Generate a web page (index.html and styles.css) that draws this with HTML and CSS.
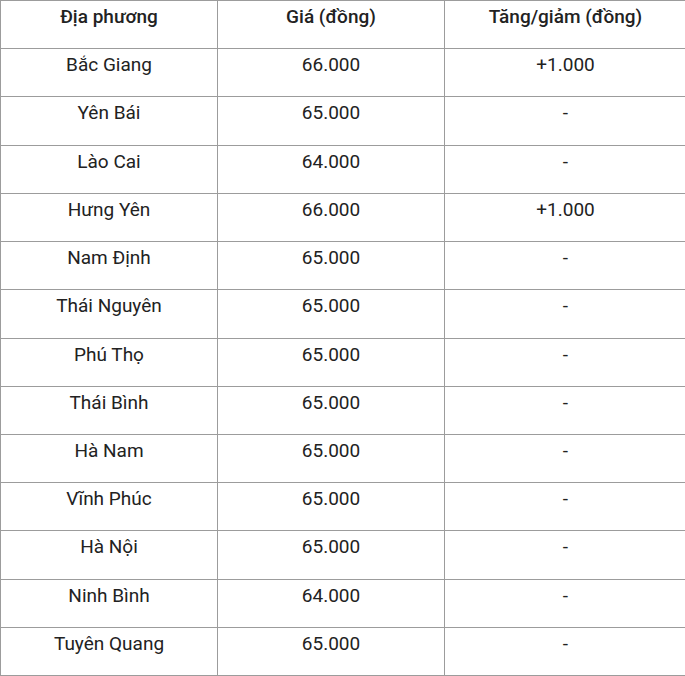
FILE: index.html
```html
<!DOCTYPE html>
<html lang="vi">
<head>
<meta charset="utf-8">
<link rel="stylesheet" href="styles.css">
</head>
<body>
<table class="price-table">
  <colgroup>
    <col class="c1"><col class="c2"><col class="c3">
  </colgroup>
  <thead>
    <tr><th>Địa phương</th><th>Giá (đồng)</th><th>Tăng/giảm (đồng)</th></tr>
  </thead>
  <tbody>
    <tr><td>Bắc Giang</td><td>66.000</td><td>+1.000</td></tr>
    <tr><td>Yên Bái</td><td>65.000</td><td>-</td></tr>
    <tr><td>Lào Cai</td><td>64.000</td><td>-</td></tr>
    <tr><td>Hưng Yên</td><td>66.000</td><td>+1.000</td></tr>
    <tr><td>Nam Định</td><td>65.000</td><td>-</td></tr>
    <tr><td>Thái Nguyên</td><td>65.000</td><td>-</td></tr>
    <tr><td>Phú Thọ</td><td>65.000</td><td>-</td></tr>
    <tr><td>Thái Bình</td><td>65.000</td><td>-</td></tr>
    <tr><td>Hà Nam</td><td>65.000</td><td>-</td></tr>
    <tr><td>Vĩnh Phúc</td><td>65.000</td><td>-</td></tr>
    <tr><td>Hà Nội</td><td>65.000</td><td>-</td></tr>
    <tr><td>Ninh Bình</td><td>64.000</td><td>-</td></tr>
    <tr><td>Tuyên Quang</td><td>65.000</td><td>-</td></tr>
  </tbody>
</table>
</body>
</html>
```
FILE: styles.css
```css
html, body {
  margin: 0;
  padding: 0;
  background: #ffffff;
}
body {
  font-family: Roboto, "Liberation Sans", sans-serif;
  color: #222222;
  overflow: hidden;
}
.price-table {
  border-collapse: collapse;
  width: 686px;
  table-layout: fixed;
  font-size: 19px;
}
.c1 { width: 217px; }
.c2 { width: 227px; }
.c3 { width: 242px; }
.price-table th,
.price-table td {
  border: 1px solid #9c9c9c;
  text-align: center;
  vertical-align: top;
  line-height: 22px;
  padding: 5px 6px 20.23px;
  box-sizing: border-box;
}
.price-table th {
  font-weight: 500;
}
.price-table td {
  font-weight: 400;
}
```
